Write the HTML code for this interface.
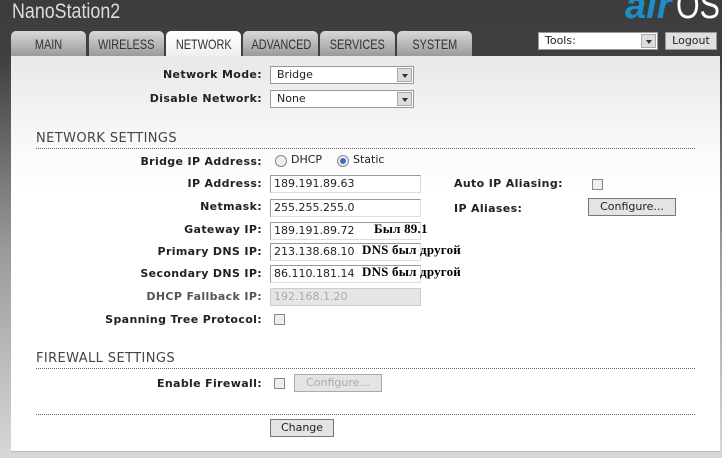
<!DOCTYPE html>
<html><head><meta charset="utf-8"><style>
*{margin:0;padding:0;box-sizing:border-box}
body{width:722px;height:458px;overflow:hidden;position:relative;background:linear-gradient(#3c3c3c 0,#404040 60px,#9a9a9a 250px,#d8d8d8 458px);font-family:"DejaVu Sans",Verdana,sans-serif;font-size:11px;color:#222}
.a{position:absolute}
.title{left:12px;top:0;color:#ddd;font-family:"Liberation Sans",sans-serif;font-size:21px;transform:scaleX(.85);transform-origin:left;line-height:24px;white-space:nowrap}
.tab{position:absolute;top:31px;height:25px;width:75px;background:linear-gradient(#d8d8d8,#9a9a9a);border-radius:5px 5px 0 0;text-align:center;font-family:"Liberation Sans",sans-serif;font-size:14px;line-height:27px;color:#333;overflow:hidden}
.tab span{display:inline-block;transform:scaleX(.78)}
.tab.on{background:linear-gradient(#fff,#eee);height:26px}
.panel{left:11px;top:56px;width:709px;height:396px;background:linear-gradient(#e8e8e8 0,#fbfbfb 100px,#fff 140px);border-bottom:1px solid #bbb}
.lb{position:absolute;right:460px;font-weight:bold;color:#222;white-space:nowrap;font-size:11px;letter-spacing:.35px}
.in{position:absolute;left:270px;width:151px;height:18px;background:#fff;border:1px solid #999;border-right-color:#ddd;border-bottom-color:#ddd;padding-left:3px;line-height:16px;font-size:11px;color:#222}
.sel{position:absolute;left:270px;width:144px;height:18px;background:#fff;border:1px solid #999;padding-left:6px;line-height:16px}
.sel i{position:absolute;right:1px;top:1px;width:15px;height:14px;background:#ddd;border:1px solid #aaa}
.sel i:after{content:"";position:absolute;left:4px;top:5px;border:3px solid transparent;border-top:4px solid #333}
.sec{position:absolute;left:36px;font-size:13px;color:#444;letter-spacing:.4px}
.line{position:absolute;left:36px;width:659px;border-top:1px dotted #666}
.cb{position:absolute;width:11px;height:11px;border:1px solid #888;background:#eee}
.btn{position:absolute;height:18px;background:#e4e4e4;border:1px solid #777;text-align:center;line-height:16px;font-size:11px}
.ru{position:absolute;left:362px;font-family:"Liberation Serif",serif;font-weight:bold;font-size:13px;color:#000;white-space:nowrap;letter-spacing:.2px}
</style></head><body>
<div class="a title">NanoStation2</div>
<div class="a" style="left:625px;top:-12px;font-family:'Liberation Sans',sans-serif;font-size:38px;line-height:36px;white-space:nowrap"><span style="color:#1a8fc8;font-style:italic;font-weight:bold">air</span><span style="color:#fff;display:inline-block;transform:scaleX(.8);transform-origin:left;margin-left:5px">OS</span></div>
<div class="tab" style="left:11px"><span>MAIN</span></div>
<div class="tab" style="left:89px"><span>WIRELESS</span></div>
<div class="tab on" style="left:166px"><span>NETWORK</span></div>
<div class="tab" style="left:243px"><span>ADVANCED</span></div>
<div class="tab" style="left:320px"><span>SERVICES</span></div>
<div class="tab" style="left:397px"><span>SYSTEM</span></div>
<div class="sel" style="left:538px;top:32px;width:120px;font-size:11px">Tools:<i></i></div>
<div class="btn" style="left:665px;top:32px;width:52px;background:#e0e0e0;border-color:#999">Logout</div>
<div class="a panel"></div>
<div class="lb" style="top:68px">Network Mode:</div>
<div class="sel" style="top:66px">Bridge<i></i></div>
<div class="lb" style="top:92px">Disable Network:</div>
<div class="sel" style="top:90px">None<i></i></div>
<div class="sec" style="top:131px">NETWORK SETTINGS</div>
<div class="line" style="top:148px"></div>
<div class="lb" style="top:155px">Bridge IP Address:</div>
<div class="a" style="left:275px;top:155px;width:12px;height:12px;border:1px solid #888;border-radius:50%;background:#eee"></div>
<div class="a" style="left:291px;top:153px">DHCP</div>
<div class="a" style="left:337px;top:155px;width:12px;height:12px;border:1px solid #888;border-radius:50%;background:#eee"><div style="margin:2px;width:6px;height:6px;border-radius:50%;background:#3a6fc0"></div></div>
<div class="a" style="left:353px;top:153px">Static</div>
<div class="lb" style="top:177px">IP Address:</div>
<div class="in" style="top:175px">189.191.89.63</div>
<div class="lb" style="top:200px">Netmask:</div>
<div class="in" style="top:199px">255.255.255.0</div>
<div class="lb" style="top:223px">Gateway IP:</div>
<div class="in" style="top:222px">189.191.89.72</div>
<div class="ru" style="left:374px;top:221px">Был 89.1</div>
<div class="lb" style="top:245px">Primary DNS IP:</div>
<div class="in" style="top:243px">213.138.68.10</div>
<div class="ru" style="top:242px">DNS был другой</div>
<div class="lb" style="top:267px">Secondary DNS IP:</div>
<div class="in" style="top:265px">86.110.181.14</div>
<div class="ru" style="top:264px">DNS был другой</div>
<div class="lb" style="top:290px;color:#555">DHCP Fallback IP:</div>
<div class="in" style="top:288px;background:#e6e6e6;color:#aaa;border-color:#ccc">192.168.1.20</div>
<div class="lb" style="top:313px">Spanning Tree Protocol:</div>
<div class="cb" style="left:274px;top:314px"></div>
<div class="lb" style="top:177px;right:auto;left:454px">Auto IP Aliasing:</div>
<div class="cb" style="left:592px;top:179px"></div>
<div class="lb" style="top:202px;right:auto;left:454px">IP Aliases:</div>
<div class="btn" style="left:588px;top:198px;width:88px">Configure...</div>
<div class="sec" style="top:351px">FIREWALL SETTINGS</div>
<div class="line" style="top:368px"></div>
<div class="lb" style="top:377px">Enable Firewall:</div>
<div class="cb" style="left:274px;top:378px"></div>
<div class="btn" style="left:294px;top:374px;width:88px;color:#aaa;border-color:#aaa">Configure...</div>
<div class="line" style="top:414px"></div>
<div class="btn" style="left:270px;top:419px;width:64px">Change</div>
</body></html>
